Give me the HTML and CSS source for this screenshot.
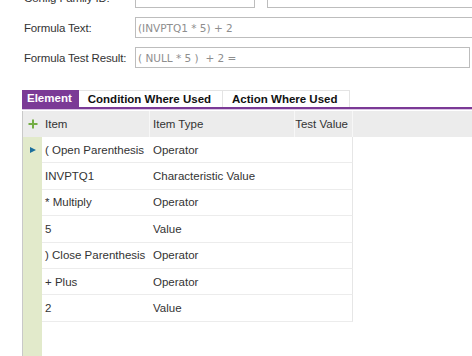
FILE: index.html
```html
<!DOCTYPE html>
<html lang="en">
<head>
    <meta charset="UTF-8">
    <title>Formula</title>
    <link rel="stylesheet" href="styles.css">
</head>
<body>
    <div class="form">
        <div class="field">
            <label>Config Family ID:</label>
            <div class="pair">
                <input class="short" type="text" value="">
                <input class="long" type="text" value="">
            </div>
        </div>
        <div class="field">
            <label>Formula Text:</label>
            <input class="wide bleed" type="text" value="(INVPTQ1 * 5) + 2">
        </div>
        <div class="field">
            <label>Formula Test Result:</label>
            <input class="wide" type="text" value="( NULL * 5 )  + 2 =">
        </div>
    </div>

    <div class="tabs">
        <div class="tab active">Element</div>
        <div class="tab">Condition Where Used</div>
        <div class="tab">Action Where Used</div>
    </div>

    <div class="grid">
        <div class="head">
            <div class="c mark">
                <svg width="10" height="10" viewBox="0 0 10 10"><path d="M5 0.5V9.5M0.5 5H9.5" stroke="#74ad45" stroke-width="2"/></svg>
            </div>
            <div class="c sep">Item</div>
            <div class="c sep">Item Type</div>
            <div class="c sep right">Test Value</div>
            <div class="c"></div>
        </div>
        <div class="row">
            <div class="c mark"><span class="arrow"></span></div>
            <div class="c">( Open Parenthesis</div>
            <div class="c">Operator</div>
            <div class="c val"></div>
            <div class="c fill"></div>
        </div>
        <div class="row">
            <div class="c mark"></div>
            <div class="c">INVPTQ1</div>
            <div class="c">Characteristic Value</div>
            <div class="c val"></div>
            <div class="c fill"></div>
        </div>
        <div class="row">
            <div class="c mark"></div>
            <div class="c">* Multiply</div>
            <div class="c">Operator</div>
            <div class="c val"></div>
            <div class="c fill"></div>
        </div>
        <div class="row">
            <div class="c mark"></div>
            <div class="c">5</div>
            <div class="c">Value</div>
            <div class="c val"></div>
            <div class="c fill"></div>
        </div>
        <div class="row">
            <div class="c mark"></div>
            <div class="c">) Close Parenthesis</div>
            <div class="c">Operator</div>
            <div class="c val"></div>
            <div class="c fill"></div>
        </div>
        <div class="row">
            <div class="c mark"></div>
            <div class="c">+ Plus</div>
            <div class="c">Operator</div>
            <div class="c val"></div>
            <div class="c fill"></div>
        </div>
        <div class="row">
            <div class="c mark"></div>
            <div class="c">2</div>
            <div class="c">Value</div>
            <div class="c val"></div>
            <div class="c fill"></div>
        </div>
    </div>
</body>
</html>
```

FILE: styles.css
```css
body{
    margin: 0;
    width: 472px;
    height: 356px;
    overflow: hidden;
    font-family: "Liberation Sans", Arial, sans-serif;
    color: #333;
    background: #fff;
}

.form{
    margin-top: -13px;
    padding-left: 24px;
    display: flex;
    flex-direction: column;
    gap: 9px;
}
.field{
    display: flex;
    align-items: center;
    height: 21px;
}
.field label{
    flex: none;
    width: 111px;
    font-size: 11.5px;
    letter-spacing: -0.15px;
    color: #333;
}
.pair{
    flex: none;
    display: flex;
    gap: 12px;
}
input{
    flex: none;
    box-sizing: border-box;
    height: 21px;
    border: 1px solid #bdbdbd;
    padding: 0 2px;
    font-family: "DejaVu Sans", Tahoma, sans-serif;
    font-size: 10.5px;
    color: #8e8e8e;
    background: #fff;
    outline: none;
}
.short{
    width: 120px;
}
.long{
    width: 220px;
}
.wide{
    width: 335px;
}
.bleed{
    width: 345px;
}

.tabs{
    margin: 22px 0 0 22px;
    display: flex;
    height: 17px;
    border-bottom: 2px solid #7b3a96;
    box-shadow: 0 1px 0 #d9c6e3;
}
.tab{
    font-weight: bold;
    font-size: 11.5px;
    line-height: 17px;
    color: #111;
    padding: 0 11px 0 9px;
    border: 1px solid #e4e4e4;
    border-bottom: none;
    border-left: none;
    box-sizing: border-box;
}
.tab.active{
    background: #7b3a96;
    color: #fff;
    padding: 0 7px 0 5px;
    border: none;
}

.grid{
    margin: 2px 0 0 22px;
    height: 250px;
    border-left: 1px solid #c9c9c9;
    background: linear-gradient(to right, #e2eacb 19px, #fff 19px);
}
.head, .row{
    display: grid;
    grid-template-columns: 19px 108px 145px 58px 1fr;
    height: 26px;
}
.head{
    background: #ececec;
}
.row{
    height: 26.4px;
}
.c{
    display: flex;
    align-items: center;
    padding-left: 3px;
    font-size: 11.5px;
    white-space: nowrap;
}
.head .c{
    color: #333;
}
.sep{
    border-right: 1px solid #f7f7f7;
}
.right{
    justify-content: flex-end;
    padding-right: 4px;
}
.mark{
    padding: 0;
    justify-content: center;
}
.row .c:not(.mark):not(.fill){
    border-bottom: 1px solid #ececec;
}
.val{
    border-right: 1px solid #e6e6e6;
}
.arrow{
    width: 0;
    height: 0;
    border-top: 3.5px solid transparent;
    border-bottom: 3.5px solid transparent;
    border-left: 6px solid #1c6f9c;
}
```
